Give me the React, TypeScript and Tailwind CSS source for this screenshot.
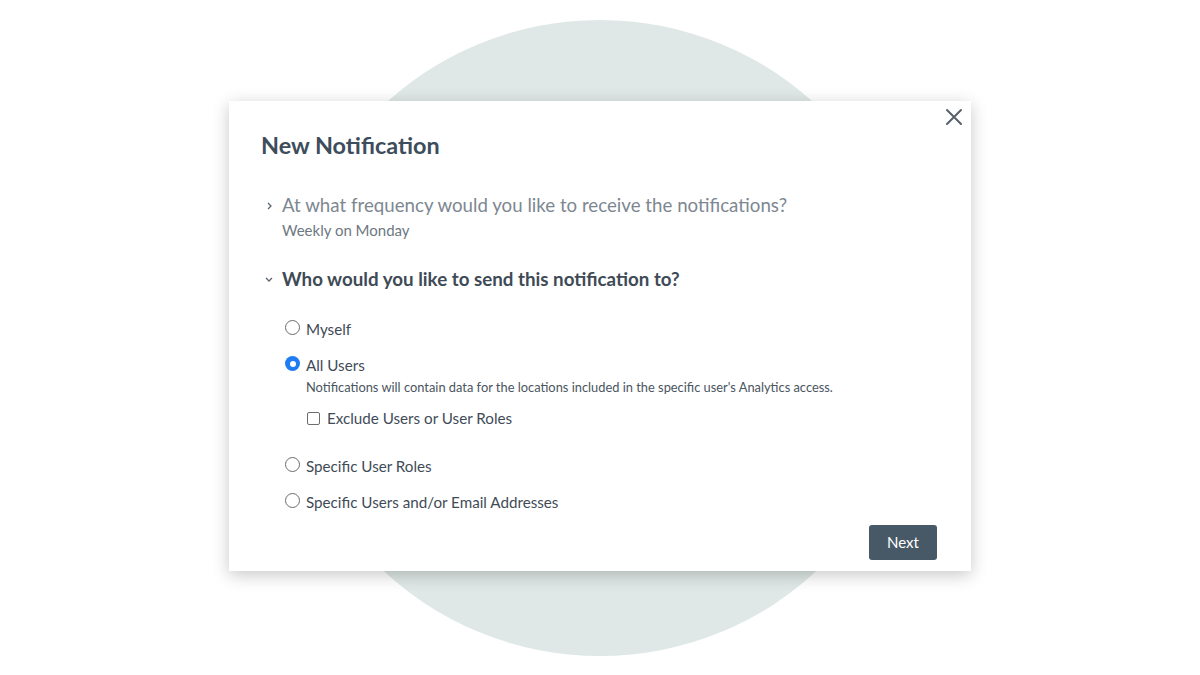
import { useState } from "react";

const OPTIONS = [
  { id: "me", label: "Myself" },
  { id: "all", label: "All Users" },
  { id: "roles", label: "Specific User Roles" },
  { id: "users", label: "Specific Users and/or Email Addresses" },
];

function Radio({ checked }: { checked: boolean }) {
  return checked ? (
    <span className="mt-[2px] flex h-[15px] w-[15px] shrink-0 items-center justify-center rounded-full bg-[#1f7cf2]">
      <span className="h-[6px] w-[6px] rounded-full bg-white" />
    </span>
  ) : (
    <span className="mt-[2px] h-[15px] w-[15px] shrink-0 rounded-full border border-[#6d6d6d] bg-white" />
  );
}

export default function App() {
  const [selected, setSelected] = useState("all");
  const [exclude, setExclude] = useState(false);

  return (
    <div
      className="relative flex h-[675px] w-[1200px] items-center justify-center overflow-hidden bg-white"
      style={{ fontFamily: "Lato, 'Open Sans', sans-serif" }}
    >
      {/* backdrop circle */}
      <div className="absolute left-[282px] top-[20px] h-[636px] w-[636px] rounded-full bg-[#dfe8e6]" />

      <div className="relative mb-[3px] h-[470px] w-[742px] bg-white px-[32px] pt-[30px] shadow-[0_4px_16px_rgba(0,0,0,0.22)]">
        <button className="absolute right-[7px] top-[6px] p-[1px] text-[#56616c]">
          <svg width="18" height="18" viewBox="0 0 18 18" fill="none" stroke="currentColor" strokeWidth="2" strokeLinecap="round">
            <path d="M2 2l14 14M16 2L2 16" />
          </svg>
        </button>

        <h2 className="text-[23.4px] font-bold leading-[28px] text-[#3e4d5b]">New Notification</h2>

        {/* collapsed question */}
        <div className="mt-[35px] flex">
          <svg className="mt-[8px] ml-[5px] mr-[9px]" width="7" height="8" viewBox="0 0 7 8" fill="none" stroke="#5c6670" strokeWidth="1.3">
            <path d="M2 1l3 3-3 3" />
          </svg>
          <div>
            <div className="text-[18.7px] leading-[22px] text-[#7d8791]">
              At what frequency would you like to receive the notifications?
            </div>
            <div className="mt-[5px] text-[15px] leading-[18px] text-[#6e7882]">Weekly on Monday</div>
          </div>
        </div>

        {/* open question */}
        <div className="mt-[29px] flex">
          <svg className="mt-[8px] ml-[4px] mr-[9px]" width="8" height="7" viewBox="0 0 8 7" fill="none" stroke="#5c6670" strokeWidth="1.3">
            <path d="M1 2l3 3 3-3" />
          </svg>
          <div className="text-[18.75px] font-bold leading-[22px] text-[#3e4a56]">
            Who would you like to send this notification to?
          </div>
        </div>

        <div className="mt-[28px] flex flex-col pl-[24px]">
          {OPTIONS.map((o) => (
            <div key={o.id} className={o.id === "roles" ? "mt-[27px]" : o.id === "me" ? "" : "mt-[14px]"}>
              <label className="flex cursor-pointer items-start gap-[6px]" onClick={() => setSelected(o.id)}>
                <Radio checked={selected === o.id} />
                <span className="text-[15.2px] leading-[22px] text-[#3f4b57]">{o.label}</span>
              </label>
              {o.id === "all" && (
                <div className="pl-[21px]">
                  <div className="mt-[3px] text-[12.85px] leading-[16px] text-[#4a5560]">
                    Notifications will contain data for the locations included in the specific user's Analytics access.
                  </div>
                  <label className="mt-[13px] flex cursor-pointer items-center gap-[7px]" onClick={() => setExclude(!exclude)}>
                    <span
                      className={`ml-[1px] h-[13px] w-[13px] rounded-[2px] border ${
                        exclude ? "border-[#1f7cf2] bg-[#1f7cf2]" : "border-[#6d6d6d] bg-white"
                      }`}
                    />
                    <span className="text-[15.2px] leading-[20px] text-[#3f4b57]">Exclude Users or User Roles</span>
                  </label>
                </div>
              )}
            </div>
          ))}
        </div>

        <button className="absolute bottom-[11px] right-[34px] h-[35px] w-[68px] rounded-[3px] bg-[#475866] text-[15px] text-white">
          Next
        </button>
      </div>
    </div>
  );
}
